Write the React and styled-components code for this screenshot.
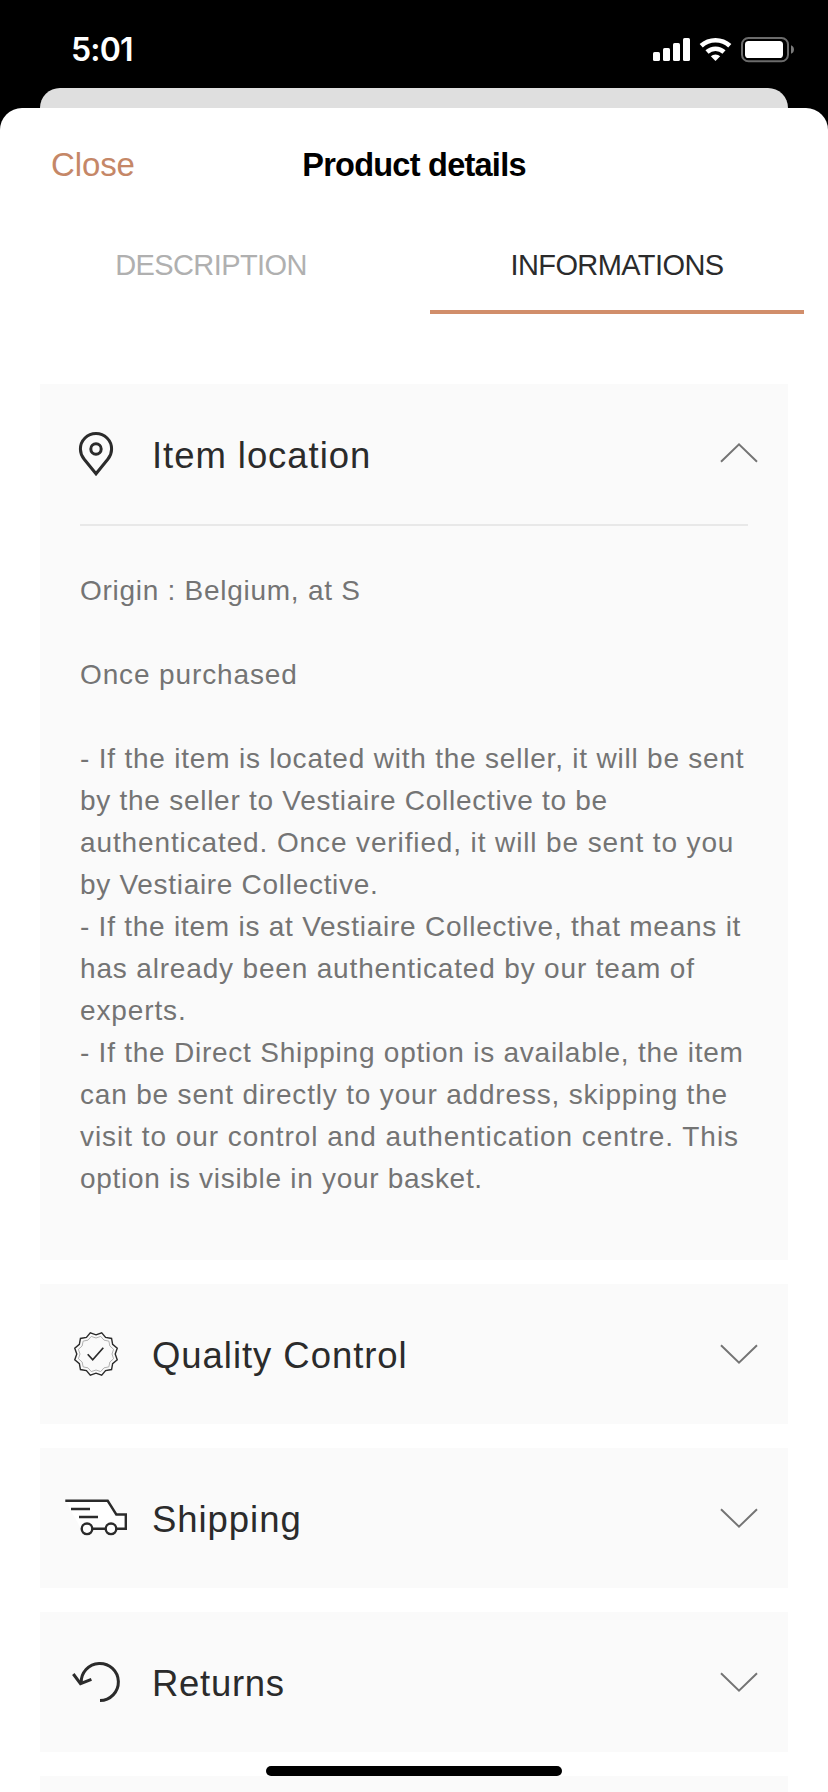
import React, { useState } from "react";
import styled, { createGlobalStyle } from "styled-components";

const GlobalStyle = createGlobalStyle`
  * { box-sizing: border-box; }
  html, body { margin: 0; padding: 0; background: #000; }
  body { font-family: "Liberation Sans", Arial, sans-serif; overflow: hidden; }
  button { font: inherit; border: 0; background: none; padding: 0; cursor: pointer; }
`;

const Screen = styled.div`
  position: relative;
  width: 828px;
  height: 1792px;
  overflow: hidden;
  background: #000;
  display: flex;
  flex-direction: column;
`;

const StatusBar = styled.header`
  height: 88px;
  flex: none;
  display: flex;
  justify-content: space-between;
  padding: 30px 33px 0 71px;
`;

const Time = styled.span`
  font-family: Inter, sans-serif;
  font-weight: 600;
  font-size: 32px;
  line-height: 39px;
  letter-spacing: -0.8px;
  color: #fff;
`;

const StatusIcons = styled.svg`
  width: 144px;
  height: 32px;
  margin-top: 3px;
`;

const BackCard = styled.div`
  height: 20px;
  flex: none;
  margin: 0 40px;
  background: #dfdfdf;
  border-radius: 20px 20px 0 0;
`;

const Sheet = styled.main`
  flex: 1;
  background: #fff;
  border-radius: 22px 22px 0 0;
  display: flex;
  flex-direction: column;
`;

const NavBar = styled.div`
  display: grid;
  grid-template-columns: 1fr auto 1fr;
  align-items: center;
  height: 112px;
  padding: 1px 51px 0;
`;

const CloseButton = styled.button`
  justify-self: start;
  font-size: 33px;
  line-height: 40px;
  letter-spacing: -0.1px;
  color: #c58767;
`;

const Title = styled.h1`
  margin: 0;
  font-size: 32.5px;
  line-height: 40px;
  letter-spacing: -0.75px;
  color: #000;
`;

const Tabs = styled.div`
  display: grid;
  grid-template-columns: 1fr 1fr;
  gap: 32px;
  padding: 0 24px;
  height: 94px;
`;

const Tab = styled.button`
  border-bottom: 4px solid ${(p) => (p.$active ? "#d18e6b" : "transparent")};
  color: ${(p) => (p.$active ? "#2b2b2b" : "#b0b0b0")};
  font-size: 29px;
  line-height: 34px;
  letter-spacing: -0.6px;
`;

const Panels = styled.div`
  display: flex;
  flex-direction: column;
  gap: 24px;
  padding: 70px 40px 0;
`;

const Panel = styled.section`
  background: #fafafa;
  flex: none;
  min-height: 140px;
`;

const PanelHeader = styled.button`
  width: 100%;
  height: 140px;
  display: flex;
  align-items: center;
  padding: 0 30px 0 24px;
  text-align: left;
`;

const PanelIcon = styled.svg`
  width: 64px;
  height: 64px;
  flex: none;
  fill: none;
  stroke: #2b2b2b;
  stroke-width: 3;
`;

const PanelTitle = styled.span`
  flex: 1;
  padding: 4px 0 0 24px;
  font-size: 36.5px;
  line-height: 42px;
  letter-spacing: ${(p) => p.$tracking}px;
  color: #2b2b2b;
`;

const Chevron = styled.svg`
  width: 38px;
  height: 20px;
  fill: none;
  stroke: #747474;
  stroke-width: 2;
  transform: ${(p) => (p.$open ? "translateY(-1px) scaleY(-1)" : "none")};
`;

const PanelBody = styled.div`
  margin: 0 40px;
  border-top: 2px solid #e8e8e8;
  padding: 44px 0 60px;
  font-size: 28px;
  line-height: 42px;
  color: #747474;
`;

const Line = styled.div`
  height: 42px;
  white-space: nowrap;
  letter-spacing: ${(p) => p.$tracking}px;
`;

const HomeIndicator = styled.div`
  position: absolute;
  left: 266px;
  bottom: 16px;
  width: 296px;
  height: 10px;
  border-radius: 5px;
  background: #000;
`;

const rosette = (tip, valley) =>
  Array.from({ length: 24 }, (_, i) => {
    const a = (i * 15 * Math.PI) / 180;
    const r = i % 2 ? tip : valley;
    return `${(32 + r * Math.sin(a)).toFixed(2)},${(32 - r * Math.cos(a)).toFixed(2)}`;
  }).join(" ");

const PinIcon = () => (
  <PanelIcon viewBox="0 0 64 64">
    <path d="M32 51.8L20.2 37.3C17.6 34 16.4 30.6 16.4 27A15.6 15.6 0 0 1 47.6 27C47.6 30.6 46.4 34 43.8 37.3Z" />
    <circle cx="32" cy="27" r="5.2" />
  </PanelIcon>
);

const RosetteIcon = () => (
  <PanelIcon viewBox="0 0 64 64">
    <polygon points={rosette(22, 19.2)} strokeWidth="1.4" />
    <polygon points={rosette(18.2, 16)} strokeWidth="0.9" stroke="#a8a8a8" />
    <path d="M23.7 32.3L28.7 37.8L39.3 25.7" strokeWidth="1.7" />
  </PanelIcon>
);

const TruckIcon = () => (
  <PanelIcon viewBox="0 0 64 64">
    <path d="M1.3 14.7H43.7L52.3 28.5H61.8V42.7H17Z" fill="#fff" stroke="none" />
    <g strokeWidth="2.4">
      <path d="M1.3 14.8H43.7L52.3 28.5H61.8V42.8H52.3M41.2 42.8H28.6M7 23H26M15 31H34" />
      <circle cx="23" cy="42.8" r="5.3" fill="#fff" />
      <circle cx="47" cy="42.8" r="5.3" fill="#fff" />
    </g>
  </PanelIcon>
);

const ReturnIcon = () => (
  <PanelIcon viewBox="0 0 64 64">
    <path d="M36 50.6A18.6 18.6 0 1 0 17.2 33" />
    <path d="M9.3 24L16.5 33.6L27.4 29.3" />
  </PanelIcon>
);

const locationText = [
  ["Origin : Belgium, at S", 0.73],
  ["", 0],
  ["Once purchased", 0.87],
  ["", 0],
  ["- If the item is located with the seller, it will be sent", 0.79],
  ["by the seller to Vestiaire Collective to be", 0.73],
  ["authenticated. Once verified, it will be sent to you", 0.88],
  ["by Vestiaire Collective.", 0.7],
  ["- If the item is at Vestiaire Collective, that means it", 0.76],
  ["has already been authenticated by our team of", 0.83],
  ["experts.", 0.88],
  ["- If the Direct Shipping option is available, the item", 0.76],
  ["can be sent directly to your address, skipping the", 0.82],
  ["visit to our control and authentication centre. This", 0.95],
  ["option is visible in your basket.", 0.7],
];

const sections = [
  { title: "Item location", Icon: PinIcon, tracking: 0.94, lines: locationText },
  { title: "Quality Control", Icon: RosetteIcon, tracking: 0.95 },
  { title: "Shipping", Icon: TruckIcon, tracking: 0.95 },
  { title: "Returns", Icon: ReturnIcon, tracking: 0.7 },
];

export default function App() {
  const [open, setOpen] = useState("Item location");
  const [tab, setTab] = useState("INFORMATIONS");
  return (
    <>
      <GlobalStyle />
      <Screen>
        <StatusBar>
          <Time>5:01</Time>
          <StatusIcons viewBox="651 33 144 32" fill="#fff">
            <rect x="653" y="52" width="7" height="9" rx="1.6" />
            <rect x="663" y="48" width="7" height="13" rx="1.6" />
            <rect x="673" y="43" width="7" height="18" rx="1.6" />
            <rect x="683" y="38" width="7" height="23" rx="1.6" />
            <g fill="none" stroke="#fff" strokeWidth="4.6">
              <path d="M701.2 45.8A21 21 0 0 1 729.8 45.8" />
              <path d="M707 52A12.6 12.6 0 0 1 724 52" />
            </g>
            <path d="M715.5 61L710.8 56.3A6.8 6.8 0 0 1 720.2 56.3Z" />
            <rect x="742" y="38" width="46" height="23.3" rx="6.5" fill="none" stroke="#6b6b6b" strokeWidth="2" />
            <rect x="745" y="41" width="38" height="17" rx="3.6" />
            <path d="M791 45.2A4.6 4.6 0 0 1 791 53.8Z" fill="#7a7a7a" />
          </StatusIcons>
        </StatusBar>
        <BackCard />
        <Sheet>
          <NavBar>
            <CloseButton>Close</CloseButton>
            <Title>Product details</Title>
          </NavBar>
          <Tabs>
            {["DESCRIPTION", "INFORMATIONS"].map((name) => (
              <Tab key={name} $active={tab === name} onClick={() => setTab(name)}>
                {name}
              </Tab>
            ))}
          </Tabs>
          <Panels>
            {sections.map(({ title, Icon, tracking, lines }) => (
              <Panel key={title}>
                <PanelHeader onClick={() => setOpen(open === title ? "" : title)}>
                  <Icon />
                  <PanelTitle $tracking={tracking}>{title}</PanelTitle>
                  <Chevron viewBox="0 0 38 20" $open={open === title}>
                    <path d="M1 1.2L19 18.6L37 1.2" />
                  </Chevron>
                </PanelHeader>
                {lines && open === title && (
                  <PanelBody>
                    {lines.map(([text, spacing], i) => (
                      <Line key={i} $tracking={spacing}>
                        {text}
                      </Line>
                    ))}
                  </PanelBody>
                )}
              </Panel>
            ))}
            <Panel />
          </Panels>
        </Sheet>
        <HomeIndicator />
      </Screen>
    </>
  );
}
